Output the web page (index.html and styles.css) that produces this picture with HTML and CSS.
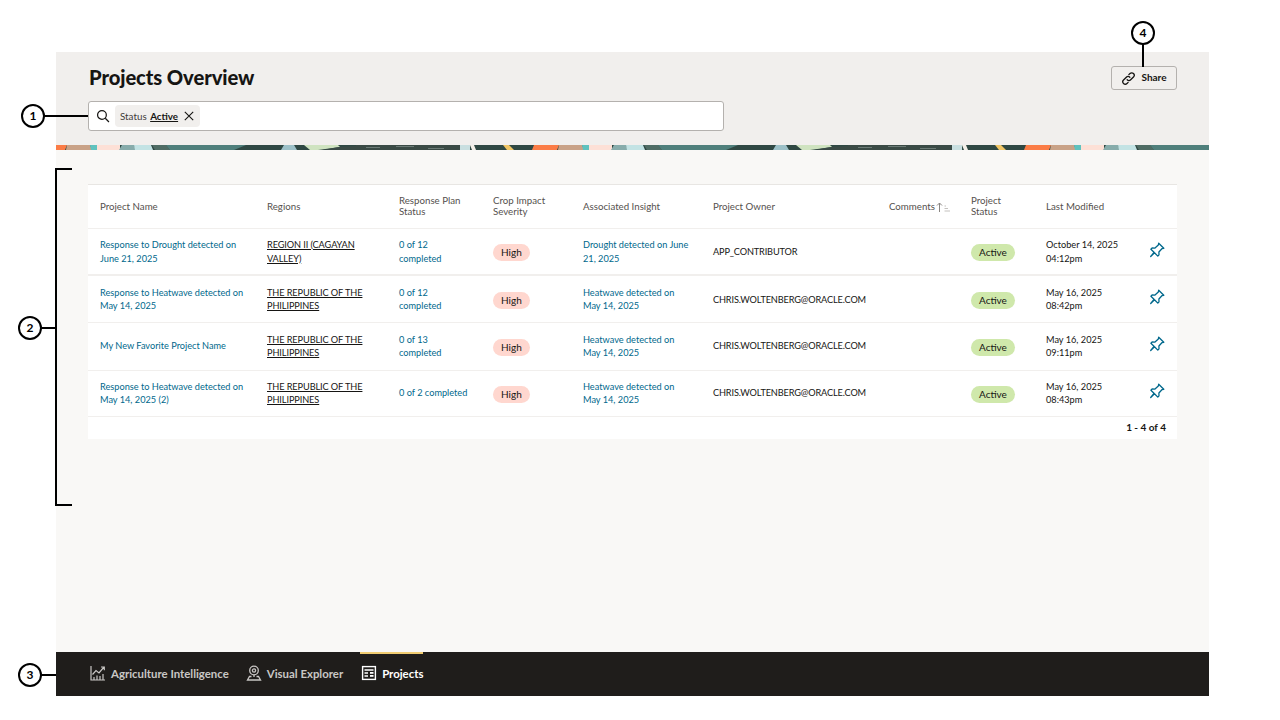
FILE: index.html
```html
<!DOCTYPE html>
<html lang="en">
<head>
<meta charset="utf-8">
<title>Projects Overview</title>
<link rel="stylesheet" href="styles.css">
</head>
<body>
<div class="frame">
  <header class="head">
    <div class="head-left">
      <h1 class="title">Projects Overview</h1>
      <div class="search">
        <svg class="search-icon" viewBox="0 0 16 16" width="14" height="14"><circle cx="6.8" cy="6.8" r="5" fill="none" stroke="#161513" stroke-width="1.4"/><path d="M10.6 10.6l4.2 4.2" stroke="#161513" stroke-width="1.4" fill="none"/></svg>
        <span class="chip">Status <b class="chip-val">Active</b>
          <svg class="chip-x" viewBox="0 0 10 10" width="10" height="10"><path d="M.8.8l8.4 8.4M9.2.8L.8 9.2" stroke="#161513" stroke-width="1.1" fill="none"/></svg>
        </span>
      </div>
    </div>
    <button class="share">
      <svg viewBox="0 0 16 16" width="15" height="15"><g fill="none" stroke="#161513" stroke-width="1.4" stroke-linecap="round"><path d="M6.6 9.4a2.6 2.6 0 0 0 3.7 0l3-3a2.6 2.6 0 0 0-3.7-3.7L8.4 3.9"/><path d="M9.4 6.6a2.6 2.6 0 0 0-3.7 0l-3 3a2.6 2.6 0 0 0 3.7 3.7l1.2-1.2"/></g></svg>
      <span class="share-text">Share</span>
    </button>
  </header>
  <svg class="strip" width="1153" height="5" aria-hidden="true">
    <defs>
      <pattern id="tile" width="492" height="5" patternUnits="userSpaceOnUse">
        <rect width="492" height="5" fill="#2f4843"/>
        <polygon points="-2,5 0,0 11,0 9,5" fill="#fb7c46"/>
        <polygon points="476,5 478,0 494,0 492,5" fill="#fb7c46"/>
        <polygon points="10,5 11,0 34,0 36,5" fill="#c9a287"/>
        <polygon points="35,5 34,0 41,0 41,5" fill="#5fc2be"/>
        <rect x="41" width="23" height="5" fill="#fde0d6"/>
        <polygon points="63,5 66,0 78,0 80,5" fill="#87acab"/>
        <polygon points="79,5 78,0 95,0 97,5" fill="#c3e3e4"/>
        <polygon points="96,0 110,0 114,5 99,5" fill="#4f6c64"/>
        <polygon points="110,0 190,0 178,5 114,5" fill="#4f7f7b"/>
        <polygon points="225,5 228,0 238,0 241,5" fill="#9dc1c8"/>
        <polygon points="248,0 282,0 284,2 262,5 254,5" fill="#cfe3c0"/>
        <polygon points="283,2 300,1 300,0 404,0 404,5 266,5" fill="#3a4a45"/>
        <rect x="310" y="2" width="14" height="1" fill="#6b7a75"/>
        <rect x="340" y="1" width="18" height="1" fill="#6b7a75"/>
        <rect x="372" y="3" width="16" height="1" fill="#6b7a75"/>
        <rect x="404" width="10" height="5" fill="#c9dfe0"/>
        <polygon points="414,0 418,0 420,5 416,5" fill="#f3efe8"/>
        <polygon points="447,0 453,0 458,5 451,5" fill="#f0c565"/>
      </pattern>
    </defs>
    <rect width="1153" height="5" fill="url(#tile)"/>
  </svg>
  <main class="main">
    <div class="card">
      <table class="grid">
        <colgroup>
          <col class="c1"><col class="c2"><col class="c3"><col class="c4"><col class="c5"><col class="c6"><col class="c7"><col class="c8"><col class="c9"><col class="c10">
        </colgroup>
        <thead>
          <tr>
            <th>Project Name</th><th>Regions</th><th>Response Plan<br>Status</th><th>Crop Impact<br>Severity</th><th>Associated Insight</th><th>Project Owner</th>
            <th>Comments <svg class="sort" viewBox="0 0 16 10" width="16" height="10"><path d="M3.5 10V1M1 3.5L3.5 1 6 3.5" fill="none" stroke="#8a8683" stroke-width="1"/><path d="M8.5 4h1.5M8.5 6.500h3.500M8.500 9h5.500" stroke="#c4c1be" stroke-width="1" fill="none"/></svg></th>
            <th>Project<br>Status</th><th>Last Modified</th><th></th>
          </tr>
        </thead>
        <tbody>
          <tr class="r1">
            <td class="name"><a class="lnk">Response to Drought detected on June 21, 2025</a></td>
            <td><a class="reg">REGION II (CAGAYAN VALLEY)</a></td>
            <td><a class="lnk">0 of 12 completed</a></td>
            <td><span class="badge high">High</span></td>
            <td><a class="lnk">Drought detected on June 21, 2025</a></td>
            <td class="own">APP_CONTRIBUTOR</td><td></td>
            <td><span class="badge act">Active</span></td>
            <td>October 14, 2025<br>04:12pm</td>
            <td class="pin"><svg viewBox="0 0 16 16" width="16" height="16"><use href="#pinicon"/></svg></td>
          </tr>
          <tr class="r2">
            <td class="name"><a class="lnk">Response to Heatwave detected on May 14, 2025</a></td>
            <td><a class="reg">THE REPUBLIC OF THE PHILIPPINES</a></td>
            <td><a class="lnk">0 of 12 completed</a></td>
            <td><span class="badge high">High</span></td>
            <td><a class="lnk">Heatwave detected on May 14, 2025</a></td>
            <td class="own">CHRIS.WOLTENBERG@ORACLE.COM</td><td></td>
            <td><span class="badge act">Active</span></td>
            <td>May 16, 2025<br>08:42pm</td>
            <td class="pin"><svg viewBox="0 0 16 16" width="16" height="16"><use href="#pinicon"/></svg></td>
          </tr>
          <tr class="r3">
            <td class="name"><a class="lnk">My New Favorite Project Name</a></td>
            <td><a class="reg">THE REPUBLIC OF THE PHILIPPINES</a></td>
            <td><a class="lnk">0 of 13 completed</a></td>
            <td><span class="badge high">High</span></td>
            <td><a class="lnk">Heatwave detected on May 14, 2025</a></td>
            <td class="own">CHRIS.WOLTENBERG@ORACLE.COM</td><td></td>
            <td><span class="badge act">Active</span></td>
            <td>May 16, 2025<br>09:11pm</td>
            <td class="pin"><svg viewBox="0 0 16 16" width="16" height="16"><use href="#pinicon"/></svg></td>
          </tr>
          <tr class="r4">
            <td class="name"><a class="lnk">Response to Heatwave detected on May 14, 2025 (2)</a></td>
            <td><a class="reg">THE REPUBLIC OF THE PHILIPPINES</a></td>
            <td><a class="lnk">0 of 2 completed</a></td>
            <td><span class="badge high">High</span></td>
            <td><a class="lnk">Heatwave detected on May 14, 2025</a></td>
            <td class="own">CHRIS.WOLTENBERG@ORACLE.COM</td><td></td>
            <td><span class="badge act">Active</span></td>
            <td>May 16, 2025<br>08:43pm</td>
            <td class="pin"><svg viewBox="0 0 16 16" width="16" height="16"><use href="#pinicon"/></svg></td>
          </tr>
        </tbody>
      </table>
      <div class="pager">1 - 4 of 4</div>
    </div>
  </main>
  <nav class="nav">
    <a class="tab">
      <svg viewBox="0 0 16 16" width="16" height="16"><g fill="none" stroke="#c9c7c5" stroke-width="1.2"><path d="M1 1v14h14"/><path d="M2.500 9.500l3.500-4 3 2.500 5-6M11 2h3.300v3.300"/><path d="M4 15v-3M7 15v-4.500M10 15v-4M13 15v-6"/></g></svg>
      Agriculture Intelligence
    </a>
    <a class="tab">
      <svg viewBox="0 0 16 16" width="16" height="16"><g fill="none" stroke="#c9c7c5" stroke-width="1.300"><circle cx="8" cy="5.500" r="4.300"/><circle cx="8" cy="5.500" r="1.600"/><path d="M8 9.800v2.200M5.500 11.500H3.500L1.500 15h13l-2-3.500h-2"/></g></svg>
      Visual Explorer
    </a>
    <a class="tab on">
      <svg viewBox="0 0 16 16" width="16" height="16"><g fill="none" stroke="#fff" stroke-width="1.400"><rect x="1.600" y="1.600" width="12.800" height="12.800"/><path d="M3.500 5h9M3.500 8h3.500M3.500 11h3.500"/></g><rect x="9" y="7" width="3.500" height="1.800" fill="#fff"/><rect x="9" y="10" width="3.500" height="1.800" fill="#fff"/></svg>
      Projects
    </a>
  </nav>
</div>

<svg class="defs" width="0" height="0" aria-hidden="true">
  <symbol id="pinicon" viewBox="0 0 16 16">
    <path d="M9.700 1.200l5.100 5.100-1.900.4-3 3.300.1 2.900-1.200 1.200-3.300-3.300-3.800 3.700 3.300-4.200-3.100-3.100 1.200-1.200 2.900.1 3.300-3z" fill="none" stroke="#00688c" stroke-width="1.300" stroke-linejoin="round"/>
  </symbol>
</svg>

<div class="mark m1"><span class="num">1</span></div>
<div class="line l1"></div>
<div class="mark m2"><span class="num">2</span></div>
<div class="line l2"></div>
<div class="bracket"></div>
<div class="mark m3"><span class="num">3</span></div>
<div class="line l3"></div>
<div class="mark m4"><span class="num">4</span></div>
<div class="line l4"></div>
</body>
</html>
```
FILE: styles.css
```css
* { box-sizing: border-box; }
html, body { margin: 0; padding: 0; }
body {
  width: 1280px;
  height: 720px;
  background: #fff;
  overflow: hidden;
  position: relative;
  font-family: Lato, "Noto Sans", sans-serif;
  color: #161513;
}
.frame {
  margin: 52px 0 0 56px;
  width: 1153px;
  height: 644px;
  display: flex;
  flex-direction: column;
  background: #f9f8f6;
}
.head {
  height: 93px;
  background: #f1efed;
  display: flex;
  justify-content: space-between;
  padding: 12px 32px 0 32px;
}
.head-left { display: flex; flex-direction: column; }
.title {
  margin: 0 0 11px 1px;
  font-size: 20.2px;
  line-height: 26px;
  font-weight: 900;
  letter-spacing: -0.1px;
  color: #161513;
}
.search {
  width: 636px;
  height: 30px;
  background: #fff;
  border: 1px solid #b4b1ae;
  border-radius: 3px;
  display: flex;
  align-items: center;
  padding-left: 7px;
  gap: 4px;
}
.search-icon { flex: none; margin-right: 1px; }
.chip {
  height: 22px;
  width: 85px;
  background: #f1efed;
  border-radius: 4px;
  display: flex;
  align-items: center;
  padding-left: 5px;
  font-size: 9.8px;
  color: #3f3c39;
  white-space: pre;
}
.chip-val { color: #161513; font-weight: 700; text-decoration: underline; margin-left: 1px; }
.chip-x { margin-left: 6px; }
.share {
  width: 66px;
  height: 24px;
  margin-top: 2px;
  background: #f1efed;
  border: 1px solid #b4b1ae;
  border-radius: 3px;
  display: flex;
  align-items: center;
  justify-content: center;
  gap: 5px;
  font: 700 10px Lato, "Noto Sans", sans-serif;
  color: #161513;
  padding: 0;
}
.share-text { margin-bottom: 2px; }
.strip { display: block; flex: none; }
.main { flex: 1; padding: 34px 32px 0; }
.card { background: #fff; border-top: 1px solid #e8e6e3; }
.grid { width: 1089px; table-layout: fixed; border-collapse: collapse; }
.c1 { width: 167px; } .c2 { width: 132px; } .c3 { width: 94px; } .c4 { width: 90px; } .c5 { width: 130px; }
.c6 { width: 176px; } .c7 { width: 82px; } .c8 { width: 75px; } .c9 { width: 104px; } .c10 { width: 39px; }
.grid th {
  height: 43px;
  padding: 0 12px;
  text-align: left;
  font-size: 9.7px;
  line-height: 11px;
  font-weight: 400;
  color: #55514e;
  border-bottom: 1px solid #f1efed;
  white-space: nowrap;
}
.grid td {
  padding: 0 12px;
  font-size: 9.2px;
  line-height: 13.500px;
  color: #161513;
  border-bottom: 1px solid #f1efed;
  vertical-align: middle;
}
.grid td.name { padding-right: 8px; }
.r1 td { height: 47px; border-bottom-width: 2px; }
.r2 td { height: 47px; }
.r3 td { height: 48px; }
.r4 td { height: 46px; }
.grid .r1 td { padding-top: 1px; line-height: 14px; }
.grid .r2 td { padding-top: 1px; }
.lnk { color: #00688c; }
.reg { color: #161513; text-decoration: underline; letter-spacing: -0.1px; }
.own { letter-spacing: -0.15px; }
.badge {
  display: inline-block;
  height: 17px;
  line-height: 17px;
  padding: 0 8px;
  border-radius: 9px;
  font-size: 10px;
  color: #161513;
  margin-top: 2px;
}
.high { background: #ffd7cf; }
.act { background: #cfe8ab; }
.sort { vertical-align: -2px; margin-left: -1px; }
.grid td.pin { padding: 0 0 4px 11px; }
.grid .r1 td.pin { padding: 0 0 2px 11px; }
.grid .r2 td.pin { padding: 0 0 4px 11px; }
.pin svg { display: block; }
.pager {
  height: 22px;
  display: flex;
  align-items: center;
  justify-content: flex-end;
  padding: 0 11px 2px 0;
  font-size: 10px;
  font-weight: 700;
}
.nav {
  height: 44px;
  flex: none;
  background: #1f1d1b;
  display: flex;
  padding-left: 33px;
  gap: 16px;
}
.tab {
  display: flex;
  align-items: center;
  gap: 5px;
  font-size: 11.4px;
  font-weight: 700;
  color: #c9c7c5;
  border-top: 2px solid transparent;
  padding: 0 0 4px 1px;
}
.tab.on { color: #fff; border-top-color: #f0cc71; margin-left: 1px; }
.defs { position: absolute; }
.mark {
  position: absolute;
  width: 24px;
  height: 24px;
  border: 2px solid #000;
  border-radius: 50%;
  background: #fff;
  display: flex;
  align-items: center;
  justify-content: center;
}
.num { font-size: 12px; font-weight: 700; color: #000; line-height: 1; }
.line { position: absolute; background: #000; }
.m1 { left: 21px; top: 104px; }
.l1 { left: 44px; top: 115px; width: 44px; height: 2px; }
.m2 { left: 18px; top: 316px; }
.l2 { left: 41px; top: 327px; width: 15px; height: 2px; }
.bracket {
  position: absolute;
  left: 55px;
  top: 168px;
  width: 17px;
  height: 338px;
  border: 2px solid #000;
  border-right: 0;
}
.m3 { left: 18px; top: 663px; }
.l3 { left: 41px; top: 674px; width: 15px; height: 2px; }
.m4 { left: 1131px; top: 21px; }
.l4 { left: 1142px; top: 44px; width: 2px; height: 23px; }
```
